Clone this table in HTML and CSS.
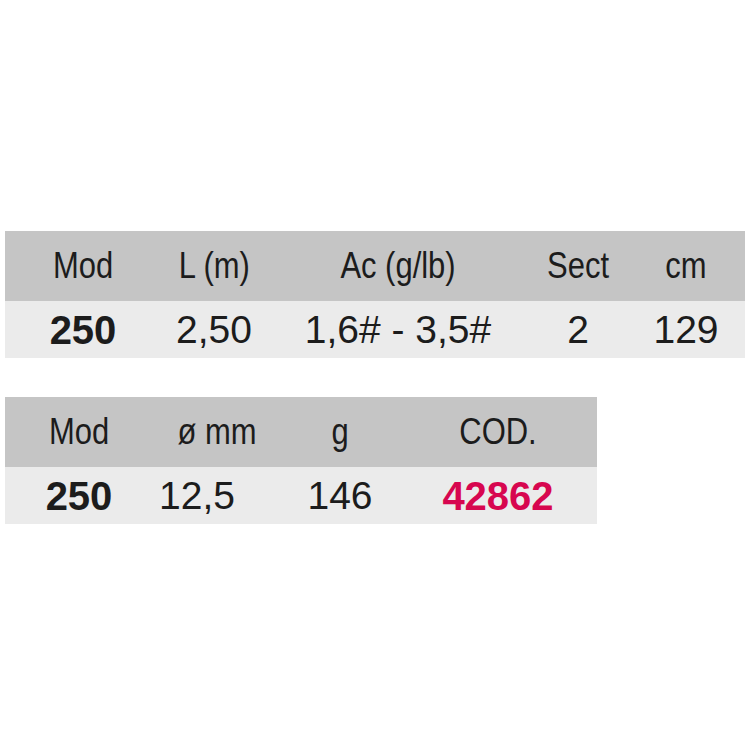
FILE: index.html
```html
<!DOCTYPE html>
<html lang="it">
<head>
<meta charset="utf-8">
<title>Specifiche</title>
<link rel="stylesheet" href="styles.css">
</head>
<body>
<div class="page">
  <div class="table t1">
    <div class="row head">
      <div class="cell c1"><span class="hd">Mod</span></div>
      <div class="cell c2"><span class="hd">L (m)</span></div>
      <div class="cell c3"><span class="hd">Ac (g/lb)</span></div>
      <div class="cell c4"><span class="hd">Sect</span></div>
      <div class="cell c5"><span class="hd">cm</span></div>
    </div>
    <div class="row data">
      <div class="cell c1 bold">250</div>
      <div class="cell c2">2,50</div>
      <div class="cell c3">1,6# - 3,5#</div>
      <div class="cell c4">2</div>
      <div class="cell c5">129</div>
    </div>
  </div>
  <div class="table t2">
    <div class="row head">
      <div class="cell d1"><span class="hd">Mod</span></div>
      <div class="cell d2"><span class="hd">ø mm</span></div>
      <div class="cell d3"><span class="hd">g</span></div>
      <div class="cell d4"><span class="hd">COD.</span></div>
    </div>
    <div class="row data">
      <div class="cell d1 bold">250</div>
      <div class="cell d2 shift">12,5</div>
      <div class="cell d3">146</div>
      <div class="cell d4 bold code">42862</div>
    </div>
  </div>
</div>
</body>
</html>
```
FILE: styles.css
```css
html, body {
  margin: 0;
  padding: 0;
  background: #ffffff;
}
body {
  font-family: "Liberation Sans", Arial, sans-serif;
  color: #1c1c1c;
}
.page {
  padding: 231px 0 0 5px;
  display: flex;
  flex-direction: column;
  align-items: flex-start;
  gap: 39px;
}
.table {
  display: flex;
  flex-direction: column;
}
.t1 { width: 740px; }
.t2 { width: 592px; }
.row {
  display: flex;
  align-items: center;
}
.head {
  height: 70px;
  background: #c5c5c5;
  font-size: 36px;
}
.data {
  height: 57px;
  background: #ebebeb;
  font-size: 39px;
}
.cell {
  text-align: center;
  white-space: nowrap;
  line-height: 1;
}
.hd {
  display: inline-block;
  transform: scaleX(0.86);
}
.bold { font-weight: bold; font-size: 40px; }
.code { color: #d7064f; }
.c1 { width: 156px; }
.c2 { width: 106px; }
.c3 { width: 262px; }
.c4 { width: 98px; }
.c5 { width: 118px; }
.d1 { width: 148px; }
.d2 { width: 128px; }
.d3 { width: 118px; }
.d4 { width: 198px; }
.shift { padding-right: 40px; box-sizing: border-box; }
```
